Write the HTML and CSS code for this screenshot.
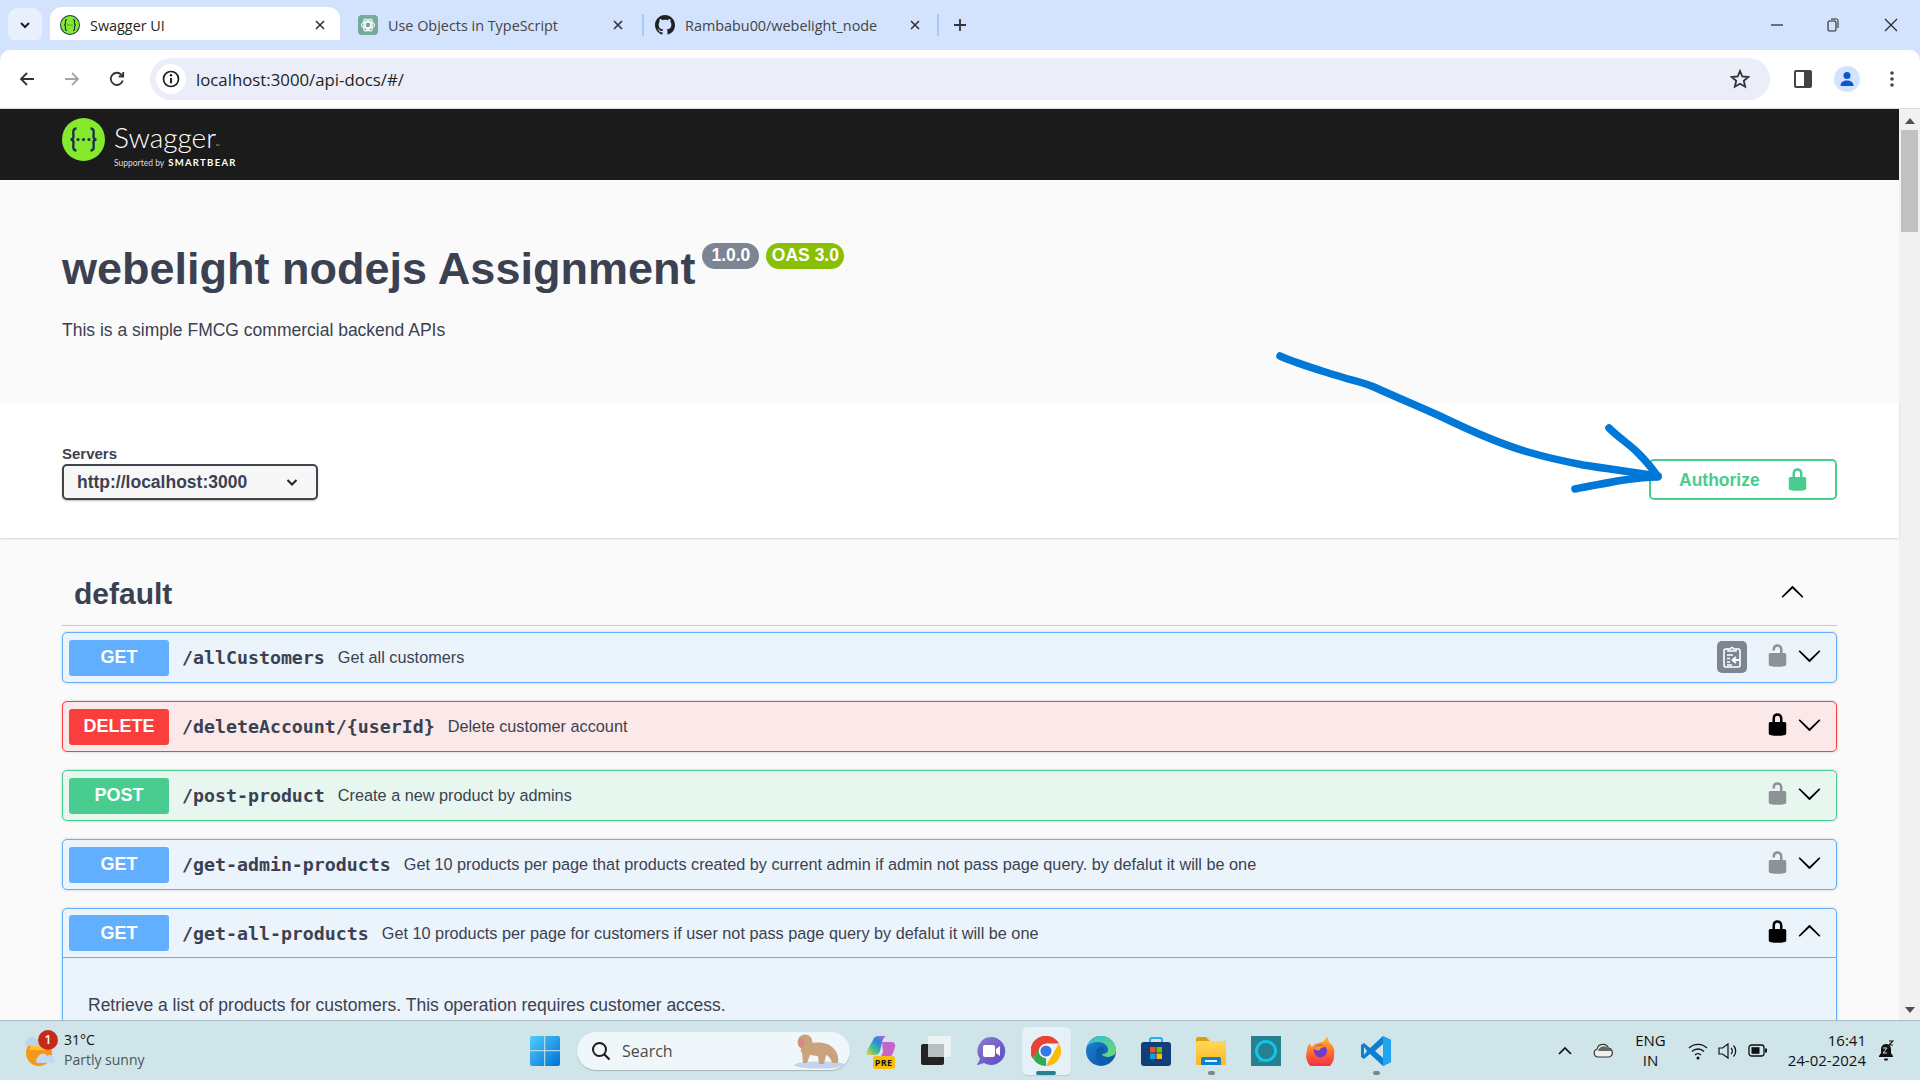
FILE: index.html
```html
<!DOCTYPE html>
<html lang="en">
<head>
<meta charset="utf-8">
<title>Swagger UI</title>
<link rel="stylesheet" href="styles.css">
</head>
<body>
<svg class="defs" width="0" height="0" aria-hidden="true">
  <symbol id="lock-open" viewBox="0 0 20 20"><path d="M15.8 8H14V5.6C14 2.703 12.665 1 10 1 7.334 1 6 2.703 6 5.6V6h2v-.801C8 3.754 8.797 3 10 3c1.203 0 2 .754 2 2.199V8H4c-.553 0-1 .646-1 1.199V17c0 .549.428 1.139.951 1.307l1.197.387C5.672 18.861 6.55 19 7.1 19h5.8c.549 0 1.428-.139 1.951-.307l1.196-.387c.524-.167.953-.757.953-1.306V9.199C17 8.646 16.352 8 15.8 8z"/></symbol>
  <symbol id="lock-closed" viewBox="0 0 20 20"><path d="M15.8 8H14V5.6C14 2.703 12.665 1 10 1 7.334 1 6 2.703 6 5.6V8H4c-.553 0-1 .646-1 1.199V17c0 .549.428 1.139.951 1.307l1.197.387C5.672 18.861 6.55 19 7.1 19h5.8c.549 0 1.428-.139 1.951-.307l1.196-.387c.524-.167.953-.757.953-1.306V9.199C17 8.646 16.352 8 15.8 8zM12 8H8V5.199C8 3.754 8.797 3 10 3c1.203 0 2 .754 2 2.199V8z"/></symbol>
  <symbol id="chev" viewBox="0 0 20 20"><path d="M17.418 6.109c.272-.268.709-.268.979 0s.271.701 0 .969l-7.908 7.83c-.27.268-.707.268-.979 0l-7.908-7.83c-.27-.268-.27-.701 0-.969.271-.268.709-.268.979 0L10 13.25l7.418-7.141z"/></symbol>
  <symbol id="x-mark" viewBox="0 0 12 12"><path d="M2 2l8 8M10 2l-8 8" fill="none" stroke="currentColor" stroke-width="1.6"/></symbol>
</svg>

<header class="tabstrip">
  <div class="tab-search"><svg width="12" height="12" viewBox="0 0 12 12"><path d="M2 4l4 4 4-4" fill="none" stroke="#1f1f1f" stroke-width="2"/></svg></div>
  <div class="tab tab-active">
    <svg class="favicon" width="20" height="20" viewBox="0 0 20 20"><circle cx="10" cy="10" r="10" fill="#173647"/><circle cx="10" cy="10" r="9" fill="#85ea2d"/><path d="M7 4.500c-2 0-1.500 2-1.500 3.500S4.500 10 4 10c.5 0 1.500.5 1.500 2s-.5 3.500 1.500 3.500M13 4.500c2 0 1.500 2 1.500 3.500s1 2 1.500 2c-.5 0-1.500.5-1.500 2s.5 3.500-1.500 3.500" fill="none" stroke="#173647" stroke-width="1.200"/><path d="M7.600 10h.8M9.600 10h.8M11.600 10h.8" stroke="#173647" stroke-width="1.200"/></svg>
    <span class="tab-title">Swagger UI</span>
    <svg class="tab-x" width="12" height="12"><use href="#x-mark"/></svg>
  </div>
  <div class="tab tab-second">
    <svg class="favicon" width="20" height="20" viewBox="0 0 20 20"><rect width="20" height="20" rx="4" fill="#74aa9c"/><g fill="none" stroke="#fff" stroke-width="1.200"><circle cx="10" cy="10" r="3"/><ellipse cx="10" cy="10" rx="6.500" ry="3.300" transform="rotate(60 10 10)"/><ellipse cx="10" cy="10" rx="6.500" ry="3.300" transform="rotate(-60 10 10)"/><ellipse cx="10" cy="10" rx="6.500" ry="3.300"/></g></svg>
    <span class="tab-title">Use Objects in TypeScript</span>
    <svg class="tab-x" width="12" height="12"><use href="#x-mark"/></svg>
  </div>
  <div class="tab tab-sep">
    <svg class="favicon" width="20" height="20" viewBox="0 0 16 16"><path fill="#1f2328" d="M8 0C3.580 0 0 3.580 0 8c0 3.540 2.290 6.530 5.470 7.590.4.070.55-.17.55-.38 0-.19-.01-.82-.01-1.490-2.010.37-2.530-.49-2.690-.94-.09-.23-.48-.94-.82-1.130-.28-.15-.68-.52-.01-.53.63-.01 1.080.58 1.230.82.72 1.210 1.870.87 2.330.66.07-.52.28-.87.51-1.070-1.780-.2-3.640-.89-3.640-3.950 0-.87.31-1.590.82-2.150-.08-.2-.36-1.020.08-2.120 0 0 .67-.21 2.200.82.64-.18 1.320-.27 2-.27s1.360.09 2 .27c1.530-1.040 2.200-.82 2.200-.82.44 1.100.16 1.920.08 2.120.51.56.82 1.270.82 2.150 0 3.070-1.870 3.750-3.650 3.950.29.25.54.73.54 1.480 0 1.070-.01 1.930-.01 2.200 0 .21.15.46.55.38A8.010 8.010 0 0 0 16 8c0-4.420-3.580-8-8-8z"/></svg>
    <span class="tab-title">Rambabu00/webelight_node</span>
    <svg class="tab-x" width="12" height="12"><use href="#x-mark"/></svg>
  </div>
  <div class="tab-new"><svg width="14" height="14" viewBox="0 0 14 14"><path d="M7 1v12M1 7h12" stroke="#333" stroke-width="1.800"/></svg></div>
  <div class="win-controls">
    <svg class="win-min" width="12" height="12" viewBox="0 0 12 12"><path d="M0 6h12" stroke="#222" stroke-width="1.200"/></svg>
    <svg class="win-max" width="12" height="14" viewBox="0 0 12 14"><rect x="1" y="3" width="8" height="10" rx="1.500" fill="none" stroke="#222" stroke-width="1.100"/><path d="M4 1h5.500A1.500 1.500 0 0 1 11 2.500V10" fill="none" stroke="#222" stroke-width="1"/></svg>
    <svg class="win-close" width="14" height="14" viewBox="0 0 14 14"><path d="M1 1l12 12M13 1L1 13" stroke="#222" stroke-width="1.100"/></svg>
  </div>
</header>

<nav class="toolbar">
  <div class="nav-btns">
    <svg width="18" height="18" viewBox="0 0 18 18"><path d="M16 9H3.500M9 3L3 9l6 6" fill="none" stroke="#333" stroke-width="1.800"/></svg>
    <svg width="18" height="18" viewBox="0 0 18 18"><path d="M2 9h12.500M9 3l6 6-6 6" fill="none" stroke="#a5a5a5" stroke-width="1.800"/></svg>
    <svg width="18" height="18" viewBox="0 0 18 18"><path d="M14.800 10.500A6.100 6.100 0 1 1 13.300 4.600L15 6.300M15.200 2v4.500h-4.500" fill="none" stroke="#333" stroke-width="1.800"/></svg>
  </div>
  <div class="omnibox">
    <div class="site-info"><svg width="18" height="18" viewBox="0 0 18 18"><circle cx="9" cy="9" r="7.500" fill="none" stroke="#1f1f1f" stroke-width="1.700"/><path d="M9 8v5.200" stroke="#1f1f1f" stroke-width="2"/><circle cx="9" cy="5.300" r="1.200" fill="#1f1f1f"/></svg></div>
    <span class="url">localhost:3000/api-docs/#/</span>
    <svg class="star" width="20" height="20" viewBox="0 0 20 20"><path d="M10 2l2.300 5.500 6 .5-4.500 3.900 1.400 5.800L10 14.700l-5.200 3 1.400-5.800L1.700 8l6-.5z" fill="none" stroke="#333" stroke-width="1.800"/></svg>
  </div>
  <div class="tool-icons">
    <svg class="ic-side" width="18" height="18" viewBox="0 0 18 18"><rect x="0" y="0" width="18" height="18" rx="2" fill="#444"/><rect x="2" y="2" width="8" height="14" fill="#fff"/></svg>
    <div class="avatar"><svg width="18" height="18" viewBox="0 0 18 18"><circle cx="9" cy="5.500" r="3.500" fill="#0b57d0"/><path d="M2.500 16c0-4 3-5.500 6.500-5.500s6.500 1.500 6.500 5.500z" fill="#0b57d0"/></svg></div>
    <svg class="ic-dots" width="6" height="18" viewBox="0 0 6 18"><circle cx="3" cy="3" r="1.800" fill="#444"/><circle cx="3" cy="9" r="1.800" fill="#444"/><circle cx="3" cy="15" r="1.800" fill="#444"/></svg>
  </div>
</nav>

<div class="viewport">
  <main class="page">
    <div class="topbar">
      <svg class="logo-mark" width="43" height="43" viewBox="0 0 43 43"><circle cx="21.500" cy="21.500" r="21.500" fill="#85ea2d"/><path d="M14.500 10.500c-4.500 0-3 5.500-3 8 0 2-1.500 3-3 3 1.500 0 3 1 3 3 0 2.500-1.500 8 3 8M28.500 10.500c4.500 0 3 5.500 3 8 0 2 1.500 3 3 3-1.500 0-3 1-3 3 0 2.500 1.500 8-3 8" fill="none" stroke="#173647" stroke-width="2.400"/><circle cx="16" cy="21.500" r="1.600" fill="#173647"/><circle cx="21.500" cy="21.500" r="1.600" fill="#173647"/><circle cx="27" cy="21.500" r="1.600" fill="#173647"/></svg>
      <div class="logo-text">
        <div class="logo-name">Swagger<span class="logo-tm">™</span></div>
        <div class="logo-sub">Supported by <b>SMARTBEAR</b></div>
      </div>
    </div>

    <section class="info">
      <div class="title-row">
        <h1 class="title">webelight nodejs Assignment</h1>
        <span class="stamp stamp-ver">1.0.0</span>
        <span class="stamp stamp-oas">OAS 3.0</span>
      </div>
      <p class="desc">This is a simple FMCG commercial backend APIs</p>
    </section>

    <section class="scheme">
      <div class="servers">
        <div class="servers-label">Servers</div>
        <div class="select"><span>http://localhost:3000</span><svg width="14" height="14" viewBox="0 0 14 14"><path d="M2.500 5l4.500 4.500L11.500 5" fill="none" stroke="#222" stroke-width="2"/></svg></div>
      </div>
      <div class="authorize"><span>Authorize</span><svg width="25" height="25"><use href="#lock-closed"/></svg></div>
    </section>

    <section class="ops">
      <div class="tag-head">
        <h2 class="tag-name">default</h2>
        <svg class="chev-up" width="25" height="25"><use href="#chev"/></svg>
      </div>

      <div class="op op-get">
        <div class="op-head">
          <span class="method">GET</span><span class="path">/allCustomers</span><span class="summary">Get all customers</span>
          <div class="op-right">
            <div class="copy-btn"><svg width="22" height="24" viewBox="0 0 22 24"><path d="M7 4H4.500A1.500 1.500 0 0 0 3 5.500v15A1.500 1.500 0 0 0 4.500 22h13a1.500 1.500 0 0 0 1.500-1.500v-15A1.500 1.500 0 0 0 17.500 4H15" fill="none" stroke="#fff" stroke-width="1.600"/><path d="M7 6V4h2.500a1.500 1.500 0 0 1 3 0H15v2z" fill="none" stroke="#fff" stroke-width="1.500"/><path d="M6 10h6M6 13.500h3M6 17h3M6 20h5" stroke="#fff" stroke-width="1.300"/><path d="M18 15h-6M15 12l-3.500 3 3.500 3" fill="none" stroke="#fff" stroke-width="1.800"/></svg></div>
            <svg class="lock lock-off" width="25" height="25"><use href="#lock-open"/></svg>
            <svg class="chev" width="25" height="25"><use href="#chev"/></svg>
          </div>
        </div>
      </div>

      <div class="op op-delete">
        <div class="op-head">
          <span class="method">DELETE</span><span class="path">/deleteAccount/{userId}</span><span class="summary">Delete customer account</span>
          <div class="op-right">
            <svg class="lock" width="25" height="25"><use href="#lock-closed"/></svg>
            <svg class="chev" width="25" height="25"><use href="#chev"/></svg>
          </div>
        </div>
      </div>

      <div class="op op-post">
        <div class="op-head">
          <span class="method">POST</span><span class="path">/post-product</span><span class="summary">Create a new product by admins</span>
          <div class="op-right">
            <svg class="lock lock-off" width="25" height="25"><use href="#lock-open"/></svg>
            <svg class="chev" width="25" height="25"><use href="#chev"/></svg>
          </div>
        </div>
      </div>

      <div class="op op-get">
        <div class="op-head">
          <span class="method">GET</span><span class="path">/get-admin-products</span><span class="summary">Get 10 products per page that products created by current admin if admin not pass page query. by defalut it will be one</span>
          <div class="op-right">
            <svg class="lock lock-off" width="25" height="25"><use href="#lock-open"/></svg>
            <svg class="chev" width="25" height="25"><use href="#chev"/></svg>
          </div>
        </div>
      </div>

      <div class="op op-get op-open">
        <div class="op-head">
          <span class="method">GET</span><span class="path">/get-all-products</span><span class="summary">Get 10 products per page for customers if user not pass page query by defalut it will be one</span>
          <div class="op-right">
            <svg class="lock" width="25" height="25"><use href="#lock-closed"/></svg>
            <svg class="chev chev-flip" width="25" height="25"><use href="#chev"/></svg>
          </div>
        </div>
        <div class="op-body">Retrieve a list of products for customers. This operation requires customer access.</div>
      </div>
    </section>
  </main>

  <aside class="scrollbar">
    <div class="sb-arrow sb-up"></div>
    <div class="sb-thumb"></div>
    <div class="sb-arrow sb-down"></div>
  </aside>

  <svg class="pen-arrow" width="400" height="240" viewBox="0 0 400 240"><g fill="none" stroke="#0078d7" stroke-width="7.500" stroke-linecap="round" stroke-linejoin="round"><path d="M2 2C20 10 38 15 57 21C72 26 84 28 96 33C120 44 140 52 164 63C195 78 222 90 250 98C270 104 290 108 305 111C330 115 355 118 380 122"/><path d="M331 74C341 84 351 90 360 99S374 114 380 123C365 123 352 125 339 127C325 130 310 132 297 135"/></g></svg>
</div>

<footer class="taskbar">
  <div class="weather">
    <div class="weather-icon">
      <svg width="32" height="34" viewBox="0 0 32 34"><circle cx="15" cy="19" r="13" fill="#f5971d"/><path d="M15 8a12 12 0 0 1 12 8H5a12 12 0 0 1 10-8z" fill="#fbc02d"/><path d="M2 12a4 4 0 0 1 1-6 5 5 0 0 1 9-1 4 4 0 0 1 3 7z" fill="#bcd4ea"/><path d="M13 29a4 4 0 0 1 1-6 5 5 0 0 1 9-1 4 4 0 0 1 6 1 4 4 0 0 1 0 6z" fill="#c5d9ee"/></svg>
      <span class="badge-count">1</span>
    </div>
    <div class="weather-text">
      <span class="w-temp">31°C</span>
      <span class="w-sub">Partly sunny</span>
    </div>
  </div>

  <div class="task-center">
    <svg class="start" width="30" height="30" viewBox="0 0 30 30"><defs><linearGradient id="winA" x1="0" y1="0" x2="1" y2="1"><stop offset="0" stop-color="#4fcdfc"/><stop offset="1" stop-color="#0170d4"/></linearGradient></defs><rect width="30" height="30" rx="2" fill="url(#winA)"/><path d="M14.700 0v30M0 14.700h30" stroke="#cfe5ea" stroke-width="1"/></svg>
    <div class="search-pill">
      <svg width="20" height="20" viewBox="0 0 20 20"><circle cx="8.500" cy="8.500" r="6.500" fill="none" stroke="#1c1c1c" stroke-width="2"/><path d="M13 13l5.500 5.500" stroke="#1c1c1c" stroke-width="2.200"/></svg>
      <span class="search-label">Search</span>
      <svg class="monkey" width="56" height="36" viewBox="0 0 56 36"><ellipse cx="30" cy="32" rx="26" ry="3.500" fill="#c3d5ee"/><path d="M14 14c6-6 22-6 28 0 5 4 7 10 6 16h-6c-1-4-3-7-6-8l-2 9h-5l-1-8-8-1-3 8h-4l-1-10c-2-2-2-4 2-6z" fill="#c9a27e"/><circle cx="15" cy="9" r="7.500" fill="#c9a27e"/><ellipse cx="11.500" cy="10" rx="3" ry="4.500" fill="#d98a80"/></svg>
    </div>

    <div class="app">
      <svg width="30" height="30" viewBox="0 0 30 30"><defs><linearGradient id="cop" x1="0" y1="1" x2="1" y2="0"><stop offset="0" stop-color="#f4d13f"/><stop offset=".35" stop-color="#3fbf8d"/><stop offset=".65" stop-color="#2c83e6"/><stop offset="1" stop-color="#d25fc2"/></linearGradient></defs><path d="M7 4c1-3 3-4 6-4h7c-2 1-3 3-4 6l-2 9c-1 3-3 4-6 4H2C0 19 0 16 2 13z" fill="url(#cop)"/><path d="M16 6h9c3 0 5 2 4 5l-2 6c-1 3-3 5-6 5h-9c3-1 4-3 5-6z" fill="#c764c9"/></svg>
      <span class="pre-tag">PRE</span>
    </div>
    <div class="app">
      <svg width="30" height="30" viewBox="0 0 30 30"><rect x="0" y="8" width="23" height="21" rx="2" fill="#232323"/><rect x="7" y="0" width="23" height="21" rx="2" fill="#f2f4f4" fill-opacity=".85"/><rect x="7" y="8" width="16" height="13" fill="#b9bfc0"/></svg>
    </div>
    <div class="app">
      <svg width="30" height="30" viewBox="0 0 30 30"><defs><linearGradient id="tm" x1="0" y1="0" x2="1" y2="1"><stop offset="0" stop-color="#8f7bd1"/><stop offset="1" stop-color="#5a4bc2"/></linearGradient></defs><path d="M15 1a14 14 0 1 1-7 26l-6 2c-1 0-1-1 0-2l2-4A14 14 0 0 1 15 1z" fill="url(#tm)"/><rect x="7" y="9" width="12" height="12" rx="2" fill="#fff"/><path d="M20 13l4-3v10l-4-3z" fill="#fff"/></svg>
    </div>
    <div class="app app-running">
      <svg width="30" height="30" viewBox="0 0 30 30"><path d="M1.500 22.500A15 15 0 0 1 28 7.500H15z" fill="#ea4335"/><path d="M28 7.500A15 15 0 0 1 15 30l6.500-11.300z" fill="#fbbc04"/><path d="M15 30A15 15 0 0 1 2 22.500l7-11.300 6 11.300z" fill="#34a853"/><circle cx="15" cy="15" r="7.200" fill="#fff"/><circle cx="15" cy="15" r="5.600" fill="#3b78e7"/></svg>
      <span class="indicator indicator-wide"></span>
    </div>
    <div class="app">
      <svg width="30" height="30" viewBox="0 0 30 30"><defs><linearGradient id="edA" x1="0" y1="0" x2="1" y2="1"><stop offset="0" stop-color="#2fc0d8"/><stop offset="1" stop-color="#6fdc6a"/></linearGradient><linearGradient id="edB" x1="0" y1="0" x2="1" y2="1"><stop offset="0" stop-color="#1c84d6"/><stop offset="1" stop-color="#0d4e9e"/></linearGradient></defs><circle cx="15" cy="15" r="15" fill="url(#edB)"/><path d="M1 10C4 3 10 0 15 0c8 0 15 6 15 14 0 5-4 7-8 7-3 0-6-1-6-3 4 0 6-2 6-4 0-5-5-8-10-8-5 0-9 2-11 4z" fill="url(#edA)"/><path d="M10 17c0-4 3-7 7-6 2 1 2 4 0 5-3 2-1 5 4 5 2 0 4 0 6-2-2 6-7 10-12 10-6-3-5-8-5-12z" fill="#0c5dad"/></svg>
    </div>
    <div class="app">
      <svg width="30" height="30" viewBox="0 0 30 30"><path d="M9 8V4a2 2 0 0 1 2-2h8a2 2 0 0 1 2 2v4" fill="none" stroke="#22b2ea" stroke-width="2"/><path d="M0 9a3 3 0 0 1 3-3h24a3 3 0 0 1 3 3v18a3 3 0 0 1-3 3H3a3 3 0 0 1-3-3z" fill="#123f7a"/><rect x="9" y="11" width="5.500" height="5.500" fill="#f25022"/><rect x="15.500" y="11" width="5.500" height="5.500" fill="#7fba00"/><rect x="9" y="17.500" width="5.500" height="5.500" fill="#00a4ef"/><rect x="15.500" y="17.500" width="5.500" height="5.500" fill="#ffb900"/></svg>
    </div>
    <div class="app">
      <svg width="30" height="30" viewBox="0 0 30 30"><defs><linearGradient id="fld" x1="0" y1="0" x2="0" y2="1"><stop offset="0" stop-color="#ffd75e"/><stop offset="1" stop-color="#fcb91a"/></linearGradient></defs><path d="M0 3a2 2 0 0 1 2-2h8l4 4h16v6H0z" fill="#dc9e0b"/><rect x="0" y="5" width="30" height="24" rx="1.500" fill="url(#fld)"/><path d="M5 29v-6a2 2 0 0 1 2-2h16a2 2 0 0 1 2 2v6z" fill="#0f7fd0"/><rect x="9" y="24" width="12" height="2" fill="#fff" fill-opacity=".9"/></svg>
      <span class="indicator"></span>
    </div>
    <div class="app">
      <svg width="30" height="30" viewBox="0 0 30 30"><rect width="30" height="30" fill="#26808f"/><circle cx="15" cy="15" r="9.500" fill="none" stroke="#10c5ea" stroke-width="3"/><path d="M9 24l-2 2 4-.5z" fill="#10c5ea"/></svg>
    </div>
    <div class="app">
      <svg width="30" height="30" viewBox="0 0 30 30"><defs><linearGradient id="ff" x1="0" y1="0" x2="0" y2="1"><stop offset="0" stop-color="#ffbd2e"/><stop offset=".6" stop-color="#ff5a30"/><stop offset="1" stop-color="#e8205a"/></linearGradient></defs><path d="M21 0c1 3 1 5 4 8 3 3 4 7 3 10a14 14 0 1 1-27-3c0-3 1-6 3-8 0 2 1 3 2 4 2-4 7-4 10-5 2-1 4-3 5-6z" fill="url(#ff)"/><circle cx="14.500" cy="15" r="6.500" fill="#6f3ec7"/><path d="M8 12c3-3 9-4 12-1-4 0-6 1-6 3-3 1-5 0-6-2z" fill="#ff8d36"/></svg>
    </div>
    <div class="app">
      <svg width="30" height="30" viewBox="0 0 30 30"><path d="M22 0l8 4v22l-8 4L9 18l-6 5-3-2v-12l3-2 6 5z" fill="#0e7fd0"/><path d="M22 0l8 4v22l-8 4z" fill="#22a5f0"/><path d="M22 8l-8 7 8 7z" fill="#cfe5ea"/><path d="M3 11l3 4-3 4z" fill="#cfe5ea"/></svg>
      <span class="indicator"></span>
    </div>
  </div>

  <div class="tray">
    <svg class="tray-chev" width="14" height="10" viewBox="0 0 14 10"><path d="M1 8l6-6 6 6" fill="none" stroke="#111" stroke-width="1.700"/></svg>
    <svg class="tray-cloud" width="21" height="15" viewBox="0 0 21 15"><path d="M5 14a4 4 0 0 1-1-7.800 6 6 0 0 1 11.500-1A4.500 4.500 0 0 1 16 14z" fill="#f0f0f0" stroke="#333" stroke-width="1.200"/><path d="M5 8a6 6 0 0 1 10-3 4 4 0 0 1 4 3z" fill="#666"/></svg>
    <div class="lang"><span>ENG</span><span>IN</span></div>
    <div class="tray-icons">
      <svg width="20" height="18" viewBox="0 0 20 18"><g fill="none" stroke="#111" stroke-width="1.300"><path d="M1 6a13 13 0 0 1 18 0M4 9.500a8.500 8.500 0 0 1 12 0M7 13a4 4 0 0 1 6 0"/></g><circle cx="10" cy="16" r="1.500" fill="#111"/></svg>
      <svg width="20" height="18" viewBox="0 0 20 18"><path d="M1 6h3.500L10 2v14l-5.500-4H1z" fill="none" stroke="#111" stroke-width="1.200"/><path d="M13 6a4 4 0 0 1 0 6M15.500 3.500a8 8 0 0 1 0 11" fill="none" stroke="#111" stroke-width="1.200"/></svg>
      <svg width="20" height="13" viewBox="0 0 20 13"><rect x="1" y="1" width="15" height="11" rx="2.500" fill="none" stroke="#111" stroke-width="1.300"/><rect x="3.500" y="3.200" width="8" height="6.600" fill="#111"/><rect x="17" y="4.500" width="2" height="4" fill="#111"/></svg>
    </div>
    <div class="clock"><span>16:41</span><span>24-02-2024</span></div>
    <svg class="bell" width="16" height="22" viewBox="0 0 16 22"><path d="M8 4a5 5 0 0 0-5 5v4l-2 3v1h14v-1l-2-3V9a5 5 0 0 0-5-5z" fill="#111"/><rect x="6" y="18.500" width="4" height="2" rx="1" fill="#111"/><path d="M5 8h4l-4 5h4" fill="none" stroke="#cfe5ea" stroke-width="1"/><path d="M11 1h4l-4 4h4" fill="none" stroke="#111" stroke-width="1.100"/></svg>
  </div>
</footer>
</body>
</html>
```
FILE: styles.css
```css
* { box-sizing: border-box; }
html, body { margin: 0; height: 100%; }
body {
  width: 1920px;
  height: 1080px;
  overflow: hidden;
  display: flex;
  flex-direction: column;
  font-family: "Liberation Sans", Arial, sans-serif;
  background: #fafafa;
}
.defs { position: absolute; }

/* Browser chrome */
.tabstrip {
  height: 50px;
  flex: none;
  background: #d3e3fd;
  display: flex;
  align-items: flex-end;
  padding-left: 8px;
  font-family: "Open Sans", "Noto Sans", sans-serif;
}
.tab-search {
  width: 34px;
  height: 34px;
  margin: 0 8px 8px 0;
  border-radius: 10px;
  background: #e9f0fd;
  display: flex;
  align-items: center;
  justify-content: center;
}
.tab {
  height: 43px;
  display: flex;
  align-items: center;
  color: #444;
  font-size: 14.400px;
  padding-bottom: 7px;
}
.tab-title { margin-left: 10px; white-space: nowrap; }
.tab-x { margin-left: auto; color: #333; flex: none; }
.tab-active {
  width: 290px;
  padding-left: 10px;
  padding-right: 14px;
  background: #fff;
  border-radius: 12px 12px 0 0;
  color: #1f1f1f;
}
.tab-second { width: 302px; padding-left: 18px; padding-right: 18px; }
.tab-sep {
  width: 297px;
  height: 22px;
  margin-bottom: 14px;
  padding: 0 16px 0 11px;
  border-left: 2px solid #a8c7fa;
  border-right: 2px solid #a8c7fa;
}
.tab-new { margin: 0 0 14px 14px; height: 22px; display: flex; align-items: center; }
.win-controls {
  margin-left: auto;
  height: 50px;
  display: flex;
  align-items: center;
  padding-right: 22px;
}
.win-max { margin-left: 44px; }
.win-close { margin-left: 45px; }

.toolbar {
  height: 59px;
  flex: none;
  background: #fff;
  border-bottom: 1px solid #dcdcdc;
  border-radius: 10px 10px 0 0;
  display: flex;
  align-items: center;
  padding-left: 18px;
  box-shadow: 0 -10px 0 #d3e3fd;
}
.nav-btns { display: flex; gap: 27px; align-items: center; width: 132px; }
.omnibox {
  width: 1620px;
  height: 42px;
  border-radius: 21px;
  background: #ebeef8;
  display: flex;
  align-items: center;
  padding: 0 20px 0 6px;
}
.site-info {
  width: 30px;
  height: 30px;
  border-radius: 50%;
  background: #fff;
  display: flex;
  align-items: center;
  justify-content: center;
}
.url { margin-left: 10px; font: 16.800px "Open Sans", sans-serif; color: #1f1f1f; }
.star { margin-left: auto; }
.tool-icons { display: flex; align-items: center; padding-left: 24px; }
.avatar {
  width: 26px;
  height: 26px;
  margin-left: 22px;
  border-radius: 50%;
  background: #d3e3fd;
  display: flex;
  align-items: center;
  justify-content: center;
}
.ic-dots { margin-left: 29px; }

/* Page viewport */
.viewport {
  flex: 1;
  min-height: 0;
  display: flex;
  position: relative;
  overflow: hidden;
}
.page { flex: 1; min-width: 0; background: #fafafa; color: #3b4151; }
.scrollbar {
  width: 21px;
  flex: none;
  background: #f1f1f1;
  display: flex;
  flex-direction: column;
  align-items: center;
  padding-top: 9px;
}
.sb-arrow { width: 0; height: 0; border-left: 5px solid transparent; border-right: 5px solid transparent; }
.sb-up { border-bottom: 6px solid #505050; }
.sb-down { border-top: 6px solid #505050; margin-top: auto; margin-bottom: 7px; }
.sb-thumb { width: 17px; height: 102px; background: #c1c1c1; margin-top: 6px; }
.pen-arrow { position: absolute; left: 1278px; top: 245px; overflow: visible; }

.topbar {
  height: 71px;
  background: #1b1b1b;
  padding: 9px 62px 0;
  display: flex;
  align-items: flex-start;
}
.logo-text { margin-left: 9px; color: #fff; font-family: Lato, sans-serif; }
.logo-name { font-size: 28px; font-weight: 300; line-height: 30px; margin-top: 4px; }
.logo-tm { font-size: 5px; line-height: 0; vertical-align: baseline; }
.logo-sub { font-size: 8.500px; line-height: 10px; margin-top: 6px; white-space: nowrap; color: #ddd; }
.logo-sub b { font-size: 9.500px; letter-spacing: 1.300px; color: #fff; margin-left: 2px; }

.info { height: 223px; padding: 62px 62px 0; }
.title-row { display: flex; align-items: flex-start; }
.title { margin: 0; font-size: 45px; line-height: 54px; font-weight: 700; white-space: nowrap; }
.stamp {
  margin-top: 1px;
  height: 26px;
  border-radius: 13px;
  color: #fff;
  font-size: 17.500px;
  font-weight: 700;
  line-height: 24px;
  padding: 0 9px;
}
.stamp-ver { margin-left: 7px; background: #7d8492; }
.stamp-oas { margin-left: 7px; background: #89bf04; padding: 0 5.500px; }
.desc { margin: 22px 0 0; font-size: 17.500px; line-height: 24px; }

.scheme {
  height: 135px;
  background: #fff;
  box-shadow: 0 1px 2px rgba(0,0,0,.15);
  padding: 41px 62px 38px;
  display: flex;
  justify-content: space-between;
  align-items: flex-end;
  position: relative;
}
.servers-label { font-size: 15px; font-weight: 700; line-height: 20px; }
.select {
  width: 256px;
  height: 36px;
  border: 2px solid #41444e;
  border-radius: 5px;
  background: #f7f7f7;
  box-shadow: 0 1px 2px rgba(0,0,0,.25);
  display: flex;
  align-items: center;
  justify-content: space-between;
  padding: 0 17px 0 13px;
  color: #3b4151;
  font-size: 17.500px;
  font-weight: 700;
}
.authorize {
  width: 188px;
  height: 41px;
  border: 2px solid #49cc90;
  border-radius: 5px;
  display: flex;
  align-items: center;
  padding: 2px 0 0 28px;
  color: #49cc90;
  font-size: 17.500px;
  font-weight: 700;
}
.authorize svg { fill: #49cc90; margin: -2px 0 0 25px; }

.ops { padding: 23px 62px 0; }
.tag-head {
  height: 65px;
  border-bottom: 1px solid #c6c8cb;
  margin-bottom: 6px;
  padding: 2px 32px 0 12px;
  display: flex;
  align-items: center;
  justify-content: space-between;
}
.tag-name { margin: 0; font-size: 30px; font-weight: 700; }
.chev-up { transform: rotate(180deg); margin-top: -4px; }

.op {
  border: 1px solid;
  border-radius: 5px;
  margin-bottom: 18.100px;
  box-shadow: 0 0 3px rgba(0,0,0,.19);
}
.op-get { border-color: #61affe; background: #ebf3fb; }
.op-delete { border-color: #f93e3e; background: #fbe9e9; }
.op-post { border-color: #49cc90; background: #e8f6f0; }
.op-get .method { background: #61affe; }
.op-delete .method { background: #f93e3e; }
.op-post .method { background: #49cc90; }
.op-head {
  height: 49px;
  padding: 0 14px 0 6px;
  display: flex;
  align-items: center;
}
.op-open .op-head { border-bottom: 1px solid #61affe; }
.method {
  width: 100px;
  height: 36px;
  flex: none;
  border-radius: 3px;
  color: #fff;
  font-size: 18px;
  font-weight: 700;
  display: flex;
  align-items: center;
  justify-content: center;
}
.path {
  margin-left: 13px;
  font-family: "DejaVu Sans Mono", "Liberation Mono", monospace;
  font-size: 18.250px;
  font-weight: 700;
  white-space: nowrap;
}
.summary { margin-left: 13px; font-size: 16.250px; white-space: nowrap; }
.op-right { margin-left: auto; display: flex; align-items: center; }
.copy-btn {
  width: 30px;
  height: 32px;
  margin: -2px 18px 0 0;
  border-radius: 5px;
  background: #7d8492;
  display: flex;
  align-items: center;
  justify-content: center;
}
.lock { fill: #000; margin-top: -4px; }
.lock-off { fill: #8d9296; }
.chev { fill: #000; margin-left: 7px; margin-top: -5px; }
.chev-flip { transform: rotate(180deg); margin-top: -3px; }
.op-body { padding: 35px 25px 20px; font-size: 17.500px; line-height: 24px; height: 120px; }

/* Taskbar */
.taskbar {
  height: 60px;
  flex: none;
  background: #cfe5ea;
  border-top: 1px solid #a9bcc4;
  display: flex;
  align-items: center;
  font-family: "Open Sans", "Noto Sans", sans-serif;
  color: #111;
  position: relative;
  z-index: 1;
}
.weather { width: 530px; padding-left: 24px; display: flex; align-items: center; flex: none; }
.weather-icon { position: relative; width: 34px; height: 34px; }
.badge-count {
  position: absolute;
  left: 14px;
  top: -4px;
  width: 20px;
  height: 20px;
  border-radius: 50%;
  background: #c42b1c;
  color: #fff;
  font-size: 12px;
  line-height: 20px;
  text-align: center;
  font-weight: 600;
}
.weather-text { display: flex; flex-direction: column; margin: -2px 0 0 6px; line-height: 20px; font-size: 14px; }
.w-sub { color: #4b5559; }
.task-center { display: flex; align-items: center; flex: none; }
.start { flex: none; }
.search-pill {
  width: 273px;
  height: 38px;
  margin: 0 3.500px 0 17px;
  border-radius: 19px;
  background: #f0f7fa;
  box-shadow: 0 1px 1px rgba(0,0,0,.2);
  display: flex;
  align-items: center;
  padding-left: 14px;
  flex: none;
}
.search-label { margin-left: 11px; font-size: 16px; color: #4a4a4a; }
.monkey { margin-left: auto; margin-right: 4px; flex: none; }
.app {
  width: 55px;
  height: 58px;
  display: flex;
  align-items: center;
  justify-content: center;
  position: relative;
  flex: none;
}
.app-running::before {
  content: "";
  position: absolute;
  left: 3px;
  right: 3px;
  top: 5px;
  bottom: 5px;
  border-radius: 5px;
  background: #e5f1f6;
  box-shadow: 0 1px 1px rgba(0,0,0,.12);
}
.app svg { position: relative; }
.pre-tag {
  position: absolute;
  left: 19px;
  top: 34px;
  width: 22px;
  height: 13px;
  border-radius: 3px;
  background: #f9bd0b;
  color: #111;
  font-size: 9px;
  font-weight: 700;
  line-height: 13px;
  text-align: center;
  letter-spacing: .3px;
}
.indicator {
  position: absolute;
  left: 50%;
  bottom: 5px;
  width: 7px;
  height: 4px;
  margin-left: -3.500px;
  border-radius: 2px;
  background: #7d8689;
}
.indicator-wide { width: 20px; margin-left: -10px; background: #26808f; }
.tray {
  margin-left: auto;
  display: flex;
  align-items: center;
  padding-right: 26px;
  font-size: 15px;
  line-height: 20px;
}
.tray-cloud { margin-left: 21px; }
.lang { display: flex; flex-direction: column; align-items: center; margin: -2px 0 0 21px; }
.tray-icons { display: flex; align-items: center; gap: 10px; margin-left: 22px; }
.clock { display: flex; flex-direction: column; align-items: flex-end; margin: -2px 0 0 20px; }
.bell { margin-left: 12px; }
```
